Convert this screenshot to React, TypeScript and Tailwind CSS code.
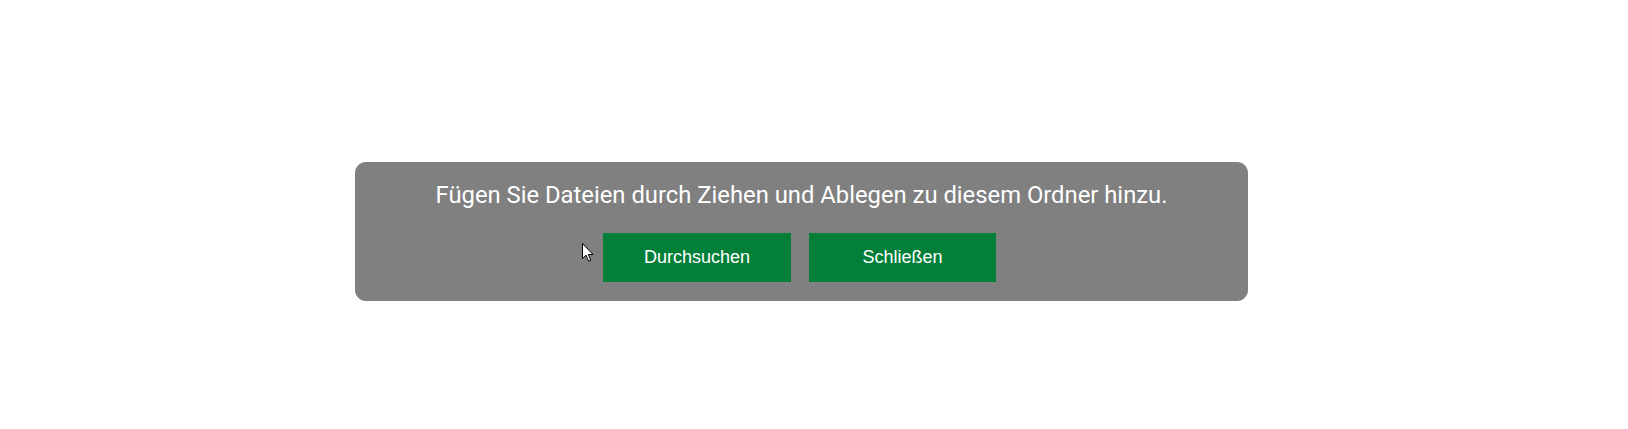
import React from "react";

function Cursor() {
  return (
    <svg
      className="absolute left-[582px] top-[243px] pointer-events-none"
      width="13"
      height="19"
      viewBox="0 0 13 19"
    >
      <path
        d="M0.5 0.5 L0.5 15.5 L4 12.2 L6.6 18.2 L8.8 17.3 L6.3 11.5 L11 11.5 Z"
        fill="#ffffff"
        stroke="#000000"
        strokeWidth="1"
        strokeLinejoin="miter"
      />
    </svg>
  );
}

export default function App() {
  return (
    <div className="relative w-[1628px] h-[429px] bg-white overflow-hidden">
      <div className="ml-[355px] pt-[162px]">
        <div className="w-[893px] h-[139px] rounded-[11px] bg-[#808080] pt-[20px] flex flex-col items-center">
          <p className="text-[23.8px] leading-[26px] text-white font-['Roboto',sans-serif]">
            Fügen Sie Dateien durch Ziehen und Ablegen zu diesem Ordner hinzu.
          </p>
          <div className="mt-[25px] flex gap-[18px] pr-[4px] font-['Liberation_Sans',Arial,sans-serif]">
            <button className="w-[188px] h-[49px] bg-[#028039] text-white text-[18px] flex items-center justify-center">
              Durchsuchen
            </button>
            <button className="w-[187px] h-[49px] bg-[#028039] text-white text-[18px] flex items-center justify-center">
              Schließen
            </button>
          </div>
        </div>
      </div>
      <Cursor />
    </div>
  );
}
